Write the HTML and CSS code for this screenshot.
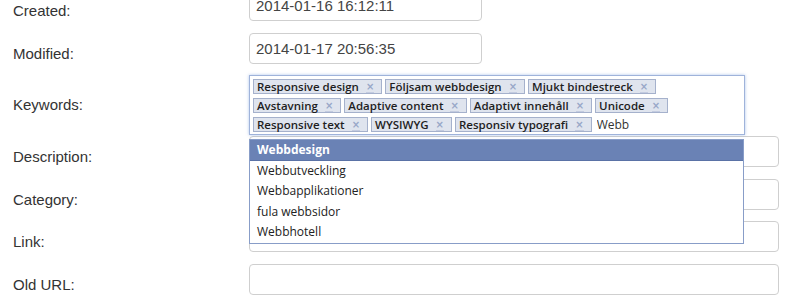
FILE: index.html
```html
<!DOCTYPE html>
<html lang="sv">
<head>
  <meta charset="UTF-8">
  <meta name="viewport" content="width=device-width, initial-scale=1.0">
  <title>Edit article</title>
  <link rel="stylesheet" href="styles.css">
</head>
<body>

  <form class="entry-form">
    <div class="field-row">
      <label class="field-label" for="created">Created:</label>
      <input class="field-input short" type="text" id="created" value="2014-01-16 16:12:11">
    </div>

    <div class="field-row">
      <label class="field-label" for="modified">Modified:</label>
      <input class="field-input short" type="text" id="modified" value="2014-01-17 20:56:35">
    </div>

    <div class="field-row keywords-row">
      <label class="field-label" for="keywords">Keywords:</label>
      <div class="keyword-wrap">
        <div class="tag-box">
          <span class="tag">Responsive design <a class="tag-remove">×</a></span>
          <span class="tag">Följsam webbdesign <a class="tag-remove">×</a></span>
          <span class="tag">Mjukt bindestreck <a class="tag-remove">×</a></span>
          <span class="tag">Avstavning <a class="tag-remove">×</a></span>
          <span class="tag">Adaptive content <a class="tag-remove">×</a></span>
          <span class="tag">Adaptivt innehåll <a class="tag-remove">×</a></span>
          <span class="tag">Unicode <a class="tag-remove">×</a></span>
          <span class="tag">Responsive text <a class="tag-remove">×</a></span>
          <span class="tag">WYSIWYG <a class="tag-remove">×</a></span>
          <span class="tag">Responsiv typografi <a class="tag-remove">×</a></span>
          <input class="tag-input" type="text" id="keywords" value="Webb">
        </div>

        <ul class="suggestions">
          <li class="selected">Webbdesign</li>
          <li>Webbutveckling</li>
          <li>Webbapplikationer</li>
          <li>fula webbsidor</li>
          <li>Webbhotell</li>
        </ul>
      </div>
    </div>

    <div class="field-row">
      <label class="field-label" for="description">Description:</label>
      <input class="field-input" type="text" id="description">
    </div>

    <div class="field-row">
      <label class="field-label" for="category">Category:</label>
      <input class="field-input" type="text" id="category">
    </div>

    <div class="field-row">
      <label class="field-label" for="link">Link:</label>
      <input class="field-input" type="text" id="link">
    </div>

    <div class="field-row">
      <label class="field-label" for="oldurl">Old URL:</label>
      <input class="field-input" type="text" id="oldurl">
    </div>
  </form>

</body>
</html>
```

FILE: styles.css
```css
/* General Styles */
* {
  margin: 0;
  padding: 0;
  box-sizing: border-box;
}

body {
  font-family: 'Liberation Sans', Arial, sans-serif;
  background-color: #ffffff;
  color: #333333;
  overflow: hidden;
}

.entry-form {
  margin-top: -10px;
  display: flex;
  flex-direction: column;
  gap: 11.5px;
}

.field-row {
  display: flex;
  align-items: flex-start;
}

.field-label {
  width: 249px;
  padding-left: 13px;
  padding-top: 12px;
  font-size: 15px;
  line-height: 17px;
  color: #333333;
}

.field-input {
  width: 530px;
  height: 31px;
  padding: 0 6px;
  font-family: 'Liberation Sans', Arial, sans-serif;
  font-size: 15px;
  color: #444444;
  border: 1px solid #cfcfcf;
  border-radius: 4px;
  background-color: #ffffff;
}

.field-input.short {
  width: 233px;
}

/* Keywords */
.keywords-row {
  margin-bottom: -10.5px;
}

.keywords-row .field-label {
  padding-top: 21px;
}

.keyword-wrap {
  position: relative;
}

.tag-box {
  width: 496px;
  height: 60px;
  padding: 3px 3px;
  display: flex;
  flex-wrap: wrap;
  align-content: flex-start;
  column-gap: 3px;
  row-gap: 4px;
  border: 1px solid #9fb3da;
  box-shadow: 0 0 3px rgba(110, 150, 220, 0.55);
  background-color: #ffffff;
}

.tag {
  display: inline-flex;
  align-items: center;
  height: 15px;
  padding: 0 7px 0 3px;
  font-family: 'Open Sans', sans-serif;
  font-size: 11.5px;
  font-weight: 600;
  color: #1e1e1e;
  background-color: #dfe4ee;
  border: 1px solid #a5b1cc;
  white-space: nowrap;
}

.tag-remove {
  margin-left: 7px;
  font-family: 'DejaVu Sans', sans-serif;
  font-size: 10px;
  font-weight: bold;
  line-height: 11px;
  color: #98a7c8;
  border-bottom: 1px solid #c3cbe0;
}

.tag-input {
  width: 80px;
  height: 15px;
  margin-left: 2px;
  border: none;
  outline: none;
  font-family: 'Open Sans', sans-serif;
  font-size: 12px;
  color: #333333;
  background: transparent;
}

.suggestions {
  position: absolute;
  top: 64px;
  left: 0;
  width: 495px;
  list-style: none;
  background-color: #ffffff;
  border: 1px solid #889dc8;
  z-index: 10;
}

.suggestions li {
  height: 20.6px;
  line-height: 20.6px;
  padding-left: 7px;
  font-family: 'Open Sans', sans-serif;
  font-size: 12px;
  color: #222222;
}

.suggestions li.selected {
  background-color: #6a82b5;
  color: #ffffff;
  font-weight: 700;
  border-bottom: 1px solid #5a72a6;
}
```
